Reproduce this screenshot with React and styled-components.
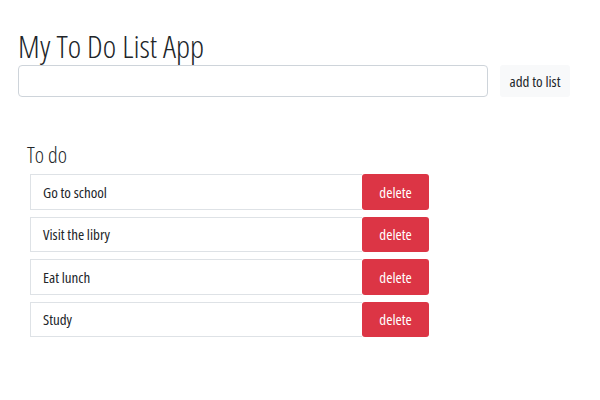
import React from 'react'
import styled, { createGlobalStyle } from 'styled-components'

const GlobalStyle = createGlobalStyle`
  body {
    margin: 0;
    background: #fff;
    font-family: 'Open Sans', sans-serif;
    font-stretch: 75%;
    color: #212529;
  }
  button, input {
    font-family: inherit;
    font-stretch: inherit;
  }
`;

const Page = styled.div`
  width: 600px;
  height: 400px;
  padding: 27px 18px 0 18px;
  box-sizing: border-box;
`;

const Title = styled.h1`
  margin: 0;
  font-size: 32px;
  font-weight: 300;
  line-height: 38px;
`;

const AddRow = styled.div`
  display: flex;
  align-items: center;
  gap: 12px;
`;

const TextInput = styled.input`
  width: 470px;
  height: 32px;
  box-sizing: border-box;
  border: 1px solid #ced4da;
  border-radius: 4px;
  font-size: 15px;
  padding: 0 10px;
`;

const AddButton = styled.button`
  width: 70px;
  height: 32px;
  padding: 0;
  border: none;
  border-radius: 3px;
  background: #f8f9fa;
  color: #212529;
  font-size: 15px;
`;

const Section = styled.div`
  margin-top: 43px;
  padding-left: 9px;
`;

const SubTitle = styled.h2`
  margin: 0 0 6px 0;
  font-size: 22px;
  font-weight: 300;
  line-height: 28px;
`;

const List = styled.ul`
  list-style: none;
  margin: 0;
  padding: 0 0 0 3px;
  display: flex;
  flex-direction: column;
  gap: 7px;
`;

const Item = styled.li`
  display: flex;
  height: 35.5px;
`;

const ItemText = styled.div`
  width: 332px;
  box-sizing: border-box;
  border: 1px solid #dee2e6;
  border-right: none;
  display: flex;
  align-items: center;
  padding-left: 12px;
  font-size: 15px;
`;

const DeleteButton = styled.button`
  width: 67px;
  border: none;
  border-radius: 3px;
  background: #dc3545;
  color: #fff;
  font-size: 15px;
`;

const todos = ['Go to school', 'Visit the libry', 'Eat lunch', 'Study'];

const App = () => {
  return (
    <Page>
      <GlobalStyle />
      <Title>My To Do List App</Title>
      <AddRow>
        <TextInput type="text" />
        <AddButton>add to list</AddButton>
      </AddRow>
      <Section>
        <SubTitle>To do</SubTitle>
        <List>
          {todos.map((t) => (
            <Item key={t}>
              <ItemText>{t}</ItemText>
              <DeleteButton>delete</DeleteButton>
            </Item>
          ))}
        </List>
      </Section>
    </Page>
  )
}

export default App
